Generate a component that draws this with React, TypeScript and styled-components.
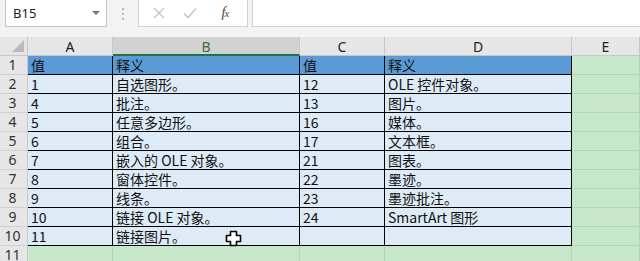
import { Fragment } from 'react';
import styled, { createGlobalStyle } from 'styled-components';

const Global = createGlobalStyle`
  html, body { margin: 0; padding: 0; background: #c6e7c9; overflow: hidden; }
  * { box-sizing: border-box; }
`;

const Page = styled.div`
  width: 640px;
  height: 261px;
  position: relative;
  overflow: hidden;
  font-family: "Noto Sans CJK SC", "Noto Sans", sans-serif;
`;

const Toolbar = styled.div`
  height: 37px;
  background: #f3f3f3;
  display: flex;
  align-items: flex-start;
  padding-left: 5px;
`;

const NameBox = styled.div`
  width: 102px;
  height: 28px;
  margin-top: -1px;
  background: #fff;
  border: 1px solid #c6c6c6;
  display: flex;
  align-items: center;
  justify-content: space-between;
  padding: 0 6px 0 7px;
  font-family: "Noto Sans", sans-serif;
  font-size: 13px;
  color: #222;
`;

const Caret = styled.span`
  width: 0;
  height: 0;
  border-left: 4px solid transparent;
  border-right: 4px solid transparent;
  border-top: 4px solid #7a7a7a;
`;

const Dots = styled.div`
  width: 31px;
  height: 28px;
  display: flex;
  flex-direction: column;
  align-items: center;
  justify-content: center;
  gap: 3px;
  span {
    width: 2px;
    height: 2px;
    background: #b5b5b5;
  }
`;

const ButtonBox = styled.div`
  width: 110px;
  height: 28px;
  margin-top: -1px;
  background: #fff;
  border: 1px solid #d2d2d2;
  display: flex;
  align-items: center;
  padding-left: 14px;
`;

const IconSlot = styled.div<{ $w: number }>`
  width: ${(p) => p.$w}px;
  display: flex;
  align-items: center;
  justify-content: center;
`;

const Fx = styled.span`
  font-family: "Liberation Serif", serif;
  font-style: italic;
  font-size: 14px;
  color: #444;
  letter-spacing: -1px;
  sub {
    font-size: 11px;
    vertical-align: baseline;
  }
`;

const FormulaInput = styled.div`
  flex: 1;
  height: 28px;
  margin-top: -1px;
  margin-left: 4px;
  background: #fff;
  border: 1px solid #d2d2d2;
  border-right: none;
`;

const Sheet = styled.div`
  display: grid;
  grid-template-columns: 28px 85px 187px 85px 187px 1fr;
  grid-auto-rows: 19px;
`;

const Corner = styled.div`
  background: #e6e6e6;
  border-right: 1px solid #c8c8c8;
  border-bottom: 1px solid #c8c8c8;
  position: relative;
  &::after {
    content: '';
    position: absolute;
    right: 3px;
    bottom: 3px;
    width: 0;
    height: 0;
    border-left: 12px solid transparent;
    border-bottom: 12px solid #b9b9b9;
  }
`;

const ColHead = styled.div<{ $sel?: boolean }>`
  background: ${(p) => (p.$sel ? '#d2d2d2' : '#e6e6e6')};
  border-right: 1px solid #c8c8c8;
  border-bottom: ${(p) => (p.$sel ? '2px solid #217346' : '1px solid #c8c8c8')};
  color: ${(p) => (p.$sel ? '#3f6a4e' : '#222')};
  font-family: "Noto Sans", sans-serif;
  font-size: 14px;
  line-height: 18px;
  text-align: center;
  padding-top: 1px;
`;

const RowHead = styled.div`
  background: #e6e6e6;
  border-right: 1px solid #c8c8c8;
  border-bottom: 1px solid #d0d0d0;
  color: #333;
  font-family: "Noto Sans", sans-serif;
  font-size: 14px;
  line-height: 18px;
  text-align: center;
  padding-right: 2px;
`;

const Cell = styled.div<{ $kind: 'head' | 'data' | 'empty' }>`
  background: ${(p) => (p.$kind === 'head' ? '#5b9bd5' : p.$kind === 'data' ? '#ddebf7' : '#c6e7c9')};
  border-right: 1px solid ${(p) => (p.$kind === 'empty' ? '#b4d6b8' : '#000')};
  border-bottom: 1px solid ${(p) => (p.$kind === 'empty' ? '#b4d6b8' : '#000')};
  color: #111;
  font-size: 14px;
  line-height: 18px;
  padding-left: 3px;
  white-space: nowrap;
  overflow: hidden;
`;

const Cursor = styled.svg`
  position: absolute;
  left: 225px;
  top: 230px;
`;

const rows: [string, string, string, string][] = [
  ['值', '释义', '值', '释义'],
  ['1', '自选图形。', '12', 'OLE 控件对象。'],
  ['4', '批注。', '13', '图片。'],
  ['5', '任意多边形。', '16', '媒体。'],
  ['6', '组合。', '17', '文本框。'],
  ['7', '嵌入的 OLE 对象。', '21', '图表。'],
  ['8', '窗体控件。', '22', '墨迹。'],
  ['9', '线条。', '23', '墨迹批注。'],
  ['10', '链接 OLE 对象。', '24', 'SmartArt 图形'],
  ['11', '链接图片。', '', ''],
];

export default function App() {
  return (
    <Page>
      <Global />
      <Toolbar>
        <NameBox>
          B15
          <Caret />
        </NameBox>
        <Dots>
          <span />
          <span />
          <span />
        </Dots>
        <ButtonBox>
          <IconSlot $w={12}>
            <svg width="12" height="12" viewBox="0 0 12 12">
              <path d="M1 1L11 11M11 1L1 11" stroke="#c4c4c4" strokeWidth="1.4" fill="none" />
            </svg>
          </IconSlot>
          <IconSlot $w={50}>
            <svg width="14" height="12" viewBox="0 0 14 12">
              <path d="M1 6.5L5 10.5L13 1.5" stroke="#c4c4c4" strokeWidth="1.6" fill="none" />
            </svg>
          </IconSlot>
          <IconSlot $w={20}>
            <Fx>
              f<sub>x</sub>
            </Fx>
          </IconSlot>
        </ButtonBox>
        <FormulaInput />
      </Toolbar>
      <Sheet>
        <Corner />
        <ColHead>A</ColHead>
        <ColHead $sel>B</ColHead>
        <ColHead>C</ColHead>
        <ColHead>D</ColHead>
        <ColHead>E</ColHead>
        {rows.map((r, i) => (
          <Fragment key={i}>
            <RowHead>{i + 1}</RowHead>
            {r.map((v, j) => (
              <Cell key={j} $kind={i === 0 ? 'head' : 'data'}>
                {v}
              </Cell>
            ))}
            <Cell $kind="empty" />
          </Fragment>
        ))}
        <RowHead>11</RowHead>
        {[0, 1, 2, 3, 4].map((j) => (
          <Cell key={j} $kind="empty" />
        ))}
      </Sheet>
      <Cursor width="17" height="17" viewBox="0 0 17 17">
        <path
          d="M5.5 1.5H11.5V5.5H15.5V11.5H11.5V15.5H5.5V11.5H1.5V5.5H5.5Z"
          fill="#fff"
          stroke="#000"
          strokeWidth="1.6"
          strokeLinejoin="round"
        />
      </Cursor>
    </Page>
  );
}
